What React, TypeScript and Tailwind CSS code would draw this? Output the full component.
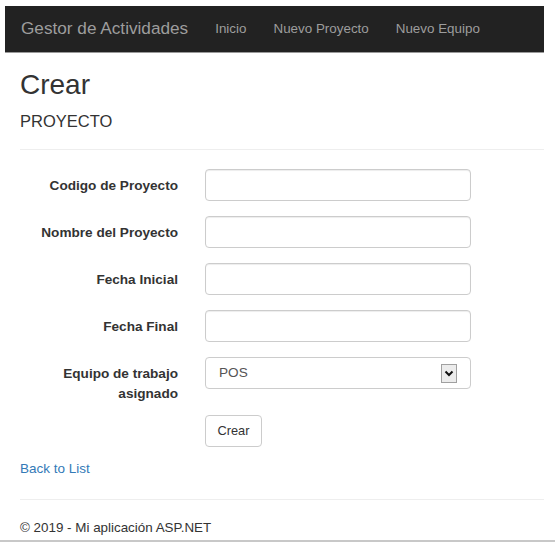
const FIELDS = ["Codigo de Proyecto", "Nombre del Proyecto", "Fecha Inicial", "Fecha Final"];

function Label({ children }: { children: React.ReactNode }) {
  return (
    <label className="w-[158px] shrink-0 pt-[7px] text-right text-[13.6px] font-bold leading-[20px] text-[#333]">
      {children}
    </label>
  );
}

export default function App() {
  return (
    <div className="flex h-[542px] w-[555px] flex-col overflow-hidden bg-white font-['Liberation_Sans',Arial,sans-serif] text-[#333]">
      <div className="pt-[6px] pl-[5px] pr-[11px]">
        {/* navbar */}
        <nav className="flex h-[47px] items-center bg-[#222] border-b border-[#9a9a9a] pl-[16px]">
          <span className="text-[17.2px] text-[#9d9d9d]">Gestor de Actividades</span>
          <div className="ml-[27px] flex gap-[27px] text-[13.4px] text-[#9d9d9d]">
            <span>Inicio</span>
            <span>Nuevo Proyecto</span>
            <span>Nuevo Equipo</span>
          </div>
        </nav>
      </div>

      <div className="pl-[20px] pr-[11px]">
        <h2 className="mt-[16px] text-[28px] leading-[32px] text-[#333]">Crear</h2>
        <h4 className="mt-[10px] text-[16.5px] leading-[20px] text-[#333]">PROYECTO</h4>
        <hr className="mt-[18px] border-t border-[#eee]" />

        <div className="mt-[19px] flex flex-col gap-[15px]">
          {FIELDS.map((f) => (
            <div key={f} className="flex">
              <Label>{f}</Label>
              <input className="ml-[27px] h-[32px] w-[266px] rounded-[4px] border border-[#ccc] bg-white shadow-[inset_0_1px_1px_rgba(0,0,0,0.075)]" />
            </div>
          ))}
          <div className="flex">
            <Label>
              Equipo de trabajo
              <br />
              asignado
            </Label>
            <div className="ml-[27px] flex h-[32px] w-[266px] items-center justify-between rounded-[4px] border border-[#ccc] bg-white pl-[13px] pr-[13px] text-[13.6px] text-[#555]">
              <span>POS</span>
              <span className="flex h-[19px] w-[16px] items-center justify-center border border-[#a0a0a0] bg-[#ececec]">
                <svg width="10" height="7" viewBox="0 0 10 7">
                  <path d="M1.5 1.5 L5 5 L8.5 1.5" fill="none" stroke="#111" strokeWidth="2" />
                </svg>
              </span>
            </div>
          </div>
          <div className="-mt-[4px] flex">
            <div className="w-[158px] shrink-0" />
            <button className="ml-[27px] h-[32px] w-[57px] rounded-[4px] border border-[#ccc] bg-white text-[12.8px] text-[#333]">
              Crear
            </button>
          </div>
        </div>

        <div className="mt-[13px] text-[13.5px] leading-[18px] text-[#337ab7]">Back to List</div>
        <hr className="mt-[21px] border-t border-[#eee]" />
        <footer className="mt-[19px] text-[13.4px] leading-[18px] text-[#333]">© 2019 - Mi aplicación ASP.NET</footer>
      </div>
      <div className="flex-1" />
      <div className="h-[2px] bg-[#c8c8c8]" />
    </div>
  );
}
